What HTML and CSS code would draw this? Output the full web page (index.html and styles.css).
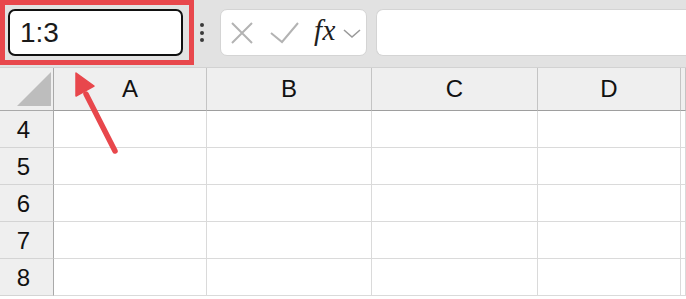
FILE: index.html
```html
<!DOCTYPE html>
<html>
<head>
<meta charset="utf-8">
<link rel="stylesheet" href="styles.css">
</head>
<body>
<div class="page">
  <div class="toolbar">
    <div class="namebox">1:3</div>
    <div class="dots"><span></span><span></span><span></span></div>
    <div class="fxbox">
      <svg class="ico-x" width="24" height="22" viewBox="0 0 24 22"><path d="M2 1 L22 21 M22 1 L2 21" stroke="#b3b3b3" stroke-width="2" fill="none"/></svg>
      <svg class="ico-check" width="30" height="22" viewBox="0 0 30 22"><path d="M1 11 L12 20 L28 1" stroke="#b3b3b3" stroke-width="2" fill="none"/></svg>
      <span class="fx">fx</span>
      <svg class="ico-chev" width="18" height="10" viewBox="0 0 18 10"><path d="M1 1 L9 8 L17 1" stroke="#9a9a9a" stroke-width="1.6" fill="none"/></svg>
    </div>
    <div class="formula"></div>
  </div>
  <div class="grid">
    <div class="corner"><div class="tri"></div></div>
    <div class="colh">A</div>
    <div class="colh">B</div>
    <div class="colh">C</div>
    <div class="colh">D</div>
    <div class="colh"></div>

    <div class="rowh">4</div><div class="cell"></div><div class="cell"></div><div class="cell"></div><div class="cell"></div><div class="cell"></div>
    <div class="rowh">5</div><div class="cell"></div><div class="cell"></div><div class="cell"></div><div class="cell"></div><div class="cell"></div>
    <div class="rowh">6</div><div class="cell"></div><div class="cell"></div><div class="cell"></div><div class="cell"></div><div class="cell"></div>
    <div class="rowh">7</div><div class="cell"></div><div class="cell"></div><div class="cell"></div><div class="cell"></div><div class="cell"></div>
    <div class="rowh">8</div><div class="cell"></div><div class="cell"></div><div class="cell"></div><div class="cell"></div><div class="cell"></div>
  </div>
  <div class="redbox"></div>
  <svg class="arrow" width="686" height="299" viewBox="0 0 686 299">
    <line x1="115" y1="151" x2="86" y2="94" stroke="#e8474c" stroke-width="5.5" stroke-linecap="round"/>
    <polygon points="76,73 94,86 76,96" fill="#e8474c" stroke="#e8474c" stroke-width="1.5" stroke-linejoin="round"/>
  </svg>
</div>
</body>
</html>
```

FILE: styles.css
```css
html, body {
  margin: 0;
  padding: 0;
  background: #ffffff;
}
.page {
  position: relative;
  width: 686px;
  height: 299px;
  overflow: hidden;
  font-family: "Liberation Sans", Arial, sans-serif;
  color: #111;
}
.toolbar {
  height: 68px;
  box-sizing: border-box;
  background: #e2e2e2;
  border-bottom: 1px solid #d2d2d2;
  display: flex;
  align-items: flex-start;
  padding: 9px 0 0 8px;
}
.namebox {
  width: 175px;
  height: 47px;
  box-sizing: border-box;
  border: 2.5px solid #111;
  border-radius: 7px;
  background: #fff;
  font-size: 28px;
  line-height: 44px;
  padding-left: 10px;
  color: #1a1a1a;
}
.dots {
  width: 37px;
  height: 47px;
  display: flex;
  flex-direction: column;
  align-items: center;
  justify-content: center;
  gap: 3.5px;
}
.dots span {
  width: 4px;
  height: 4px;
  border-radius: 50%;
  background: #3a3a3a;
}
.fxbox {
  width: 147px;
  height: 47px;
  box-sizing: border-box;
  background: #fff;
  border: 1px solid #d4d4d4;
  border-radius: 7px;
  display: flex;
  align-items: center;
  padding-left: 9px;
}
.ico-x { margin-top: 1px; }
.ico-check { margin-left: 16px; }
.fx {
  font-family: "Liberation Serif", "Times New Roman", serif;
  font-style: italic;
  font-size: 29px;
  color: #1e1e1e;
  margin-left: 14px;
  margin-top: -4px;
  letter-spacing: 0.5px;
}
.ico-chev { margin-left: 7px; margin-top: 2px; }
.formula {
  flex: 1;
  margin-left: 9px;
  height: 47px;
  box-sizing: border-box;
  background: #fff;
  border: 1px solid #d4d4d4;
  border-right: none;
  border-radius: 7px 0 0 7px;
}
.grid {
  display: grid;
  grid-template-columns: 54px 153px 165px 166px 143px 1fr;
  grid-template-rows: 43px repeat(5, 37px);
}
.corner {
  background: #efefef;
  border-right: 1px solid #a9a9a9;
  border-bottom: 1px solid #a9a9a9;
  position: relative;
}
.tri {
  position: absolute;
  left: 17px;
  top: 4px;
  width: 0;
  height: 0;
  border-left: 34px solid transparent;
  border-bottom: 34px solid #bdbdbd;
}
.colh {
  background: #efefef;
  border-right: 1px solid #c4c4c4;
  border-bottom: 1px solid #9e9e9e;
  font-size: 24px;
  text-align: center;
  line-height: 42px;
  color: #111;
}
.rowh {
  background: #efefef;
  border-right: 1px solid #a9a9a9;
  border-bottom: 1px solid #d4d4d4;
  font-size: 24px;
  line-height: 37px;
  text-align: center;
  padding-right: 6px;
  color: #111;
}
.cell {
  border-right: 1px solid #dadada;
  border-bottom: 1px solid #dadada;
}
.redbox {
  position: absolute;
  left: 0;
  top: 0;
  width: 194px;
  height: 65px;
  box-sizing: border-box;
  border: 5px solid #e8474c;
}
.arrow {
  position: absolute;
  left: 0;
  top: 0;
}
```
